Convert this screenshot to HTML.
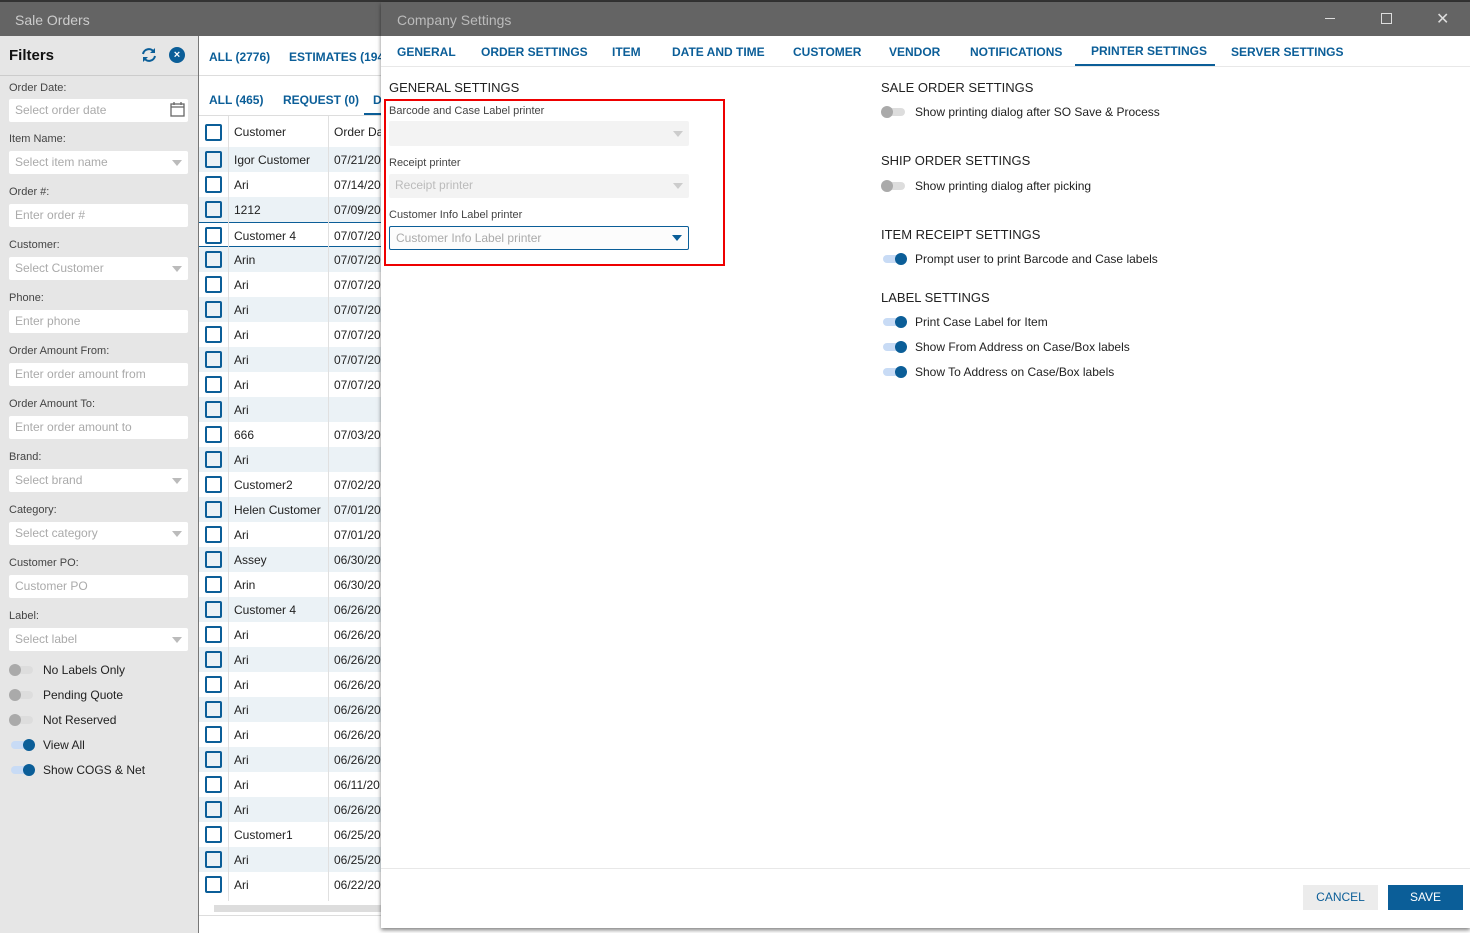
<!DOCTYPE html>
<html><head><meta charset="utf-8"><style>
*{box-sizing:border-box;margin:0;padding:0}
body{width:1470px;height:933px;overflow:hidden;background:#fff;font-family:"Liberation Sans",sans-serif;font-size:12px;color:#222;position:relative}
.a{position:absolute;white-space:nowrap}
.tb{background:#646464;height:34px;top:2px}
.lbl{font-size:11px;color:#444}
.in{background:#fff;height:23px;border-radius:2px;color:#aaa;font-size:12px;padding:4px 6px}
.tri{position:absolute;right:6px;top:9px;width:0;height:0;border-left:5px solid transparent;border-right:5px solid transparent;border-top:6px solid #bbb}
.tg{position:absolute;width:22px;height:8px;border-radius:4px}
.tg i{position:absolute;width:12px;height:12px;border-radius:6px;top:-2px}
.off{background:#ddd}.off i{background:#aaa;left:-2px}
.on{background:#c8dbf5}.on i{background:#0b5e98;right:-2px}
.tab{color:#0b5e98;font-weight:bold;font-size:12px}
.cb{position:absolute;left:6px;width:17px;height:17px;border:2px solid #0b5e98;border-radius:2px;background:#fff}
.row{position:absolute;left:199px;width:182px;height:25px;font-size:12px;overflow:hidden}
.row span{position:absolute;top:6px;white-space:nowrap}
</style></head><body>
<div class="a" style="left:0;top:0;width:1470px;height:2px;background:#333"></div>
<div class="a tb" style="left:0;width:381px"></div>
<div class="a" style="left:15px;top:12px;font-size:14px;color:#ccc">Sale Orders</div>
<div class="a" style="left:0;top:36px;width:198px;height:897px;background:#e6e6e6"></div>
<div class="a" style="left:198px;top:36px;width:1px;height:897px;background:#777"></div>
<div class="a" style="left:9px;top:47px;font-size:15px;font-weight:bold;color:#111">Filters</div>
<svg class="a" style="left:140px;top:47px" width="18" height="16" viewBox="0 0 18 16"><path d="M3 7a6 6 0 0 1 11-2M15 9a6 6 0 0 1-11 2" fill="none" stroke="#0b5e98" stroke-width="2"/><path d="M15 1v5h-5zM3 15v-5h5z" fill="#0b5e98"/></svg>
<div class="a" style="left:169px;top:47px;width:16px;height:16px;border-radius:8px;background:#0b5e98;color:#fff;font-size:11px;text-align:center;line-height:16px;font-weight:bold">×</div>
<div class="a" style="left:0;top:75px;width:198px;height:1px;background:#ccc"></div>
<div class="a lbl" style="left:9px;top:82px">Order Date:</div>
<div class="a in" style="left:9px;top:99px;width:179px">Select order date<svg style="position:absolute;right:3px;top:3px" width="15" height="15" viewBox="0 0 15 15"><rect x="1" y="2" width="13" height="12" fill="none" stroke="#666" stroke-width="1.3"/><path d="M1 5h13M4 0v3M11 0v3" stroke="#666" stroke-width="1.3"/></svg></div>
<div class="a lbl" style="left:9px;top:133px">Item Name:</div>
<div class="a in" style="left:9px;top:151px;width:179px">Select item name<div class="tri"></div></div>
<div class="a lbl" style="left:9px;top:186px">Order #:</div>
<div class="a in" style="left:9px;top:204px;width:179px">Enter order #</div>
<div class="a lbl" style="left:9px;top:239px">Customer:</div>
<div class="a in" style="left:9px;top:257px;width:179px">Select Customer<div class="tri"></div></div>
<div class="a lbl" style="left:9px;top:292px">Phone:</div>
<div class="a in" style="left:9px;top:310px;width:179px">Enter phone</div>
<div class="a lbl" style="left:9px;top:345px">Order Amount From:</div>
<div class="a in" style="left:9px;top:363px;width:179px">Enter order amount from</div>
<div class="a lbl" style="left:9px;top:398px">Order Amount To:</div>
<div class="a in" style="left:9px;top:416px;width:179px">Enter order amount to</div>
<div class="a lbl" style="left:9px;top:451px">Brand:</div>
<div class="a in" style="left:9px;top:469px;width:179px">Select brand<div class="tri"></div></div>
<div class="a lbl" style="left:9px;top:504px">Category:</div>
<div class="a in" style="left:9px;top:522px;width:179px">Select category<div class="tri"></div></div>
<div class="a lbl" style="left:9px;top:557px">Customer PO:</div>
<div class="a in" style="left:9px;top:575px;width:179px">Customer PO</div>
<div class="a lbl" style="left:9px;top:610px">Label:</div>
<div class="a in" style="left:9px;top:628px;width:179px">Select label<div class="tri"></div></div>
<div class="tg off" style="left:11px;top:666px"><i></i></div><div class="a" style="left:43px;top:663px">No Labels Only</div>
<div class="tg off" style="left:11px;top:691px"><i></i></div><div class="a" style="left:43px;top:688px">Pending Quote</div>
<div class="tg off" style="left:11px;top:716px"><i></i></div><div class="a" style="left:43px;top:713px">Not Reserved</div>
<div class="tg on" style="left:11px;top:741px"><i></i></div><div class="a" style="left:43px;top:738px">View All</div>
<div class="tg on" style="left:11px;top:766px"><i></i></div><div class="a" style="left:43px;top:763px">Show COGS &amp; Net</div>
<div class="a tab" style="left:209px;top:50px">ALL (2776)</div>
<div class="a tab" style="left:289px;top:50px">ESTIMATES (194</div>
<div class="a" style="left:199px;top:75px;width:182px;height:1px;background:#ddd"></div>
<div class="a tab" style="left:209px;top:93px">ALL (465)</div>
<div class="a tab" style="left:283px;top:93px">REQUEST (0)</div>
<div class="a tab" style="left:373px;top:93px">D</div>
<div class="a" style="left:364px;top:113px;width:17px;height:2px;background:#0b5e98"></div>
<div class="a" style="left:199px;top:115px;width:182px;height:1px;background:#ddd"></div>
<div id="rows"></div>
<div class="a" style="left:228px;top:116px;width:1px;height:785px;background:#e0e0e0"></div>
<div class="a" style="left:328px;top:116px;width:1px;height:785px;background:#e0e0e0"></div>
<div class="a" style="left:214px;top:905px;width:167px;height:7px;background:#ddd"></div>
<div class="a" style="left:199px;top:915px;width:182px;height:1px;background:#ddd"></div>
<div class="a" style="left:381px;top:2px;width:1089px;height:926px;background:#fff;box-shadow:0 2px 4px rgba(0,0,0,.5)"></div>
<div class="a tb" style="left:381px;width:1089px"></div>
<div class="a" style="left:397px;top:12px;font-size:14px;color:#bbb">Company Settings</div>
<div class="a" style="left:1325px;top:18px;width:10px;height:1px;background:#ddd"></div>
<div class="a" style="left:1381px;top:13px;width:11px;height:11px;border:1px solid #ddd"></div>
<div class="a" style="left:1436px;top:9px;font-size:16px;color:#ddd">✕</div>
<div class="a tab" style="left:397px;top:45px">GENERAL</div>
<div class="a tab" style="left:481px;top:45px">ORDER SETTINGS</div>
<div class="a tab" style="left:612px;top:45px">ITEM</div>
<div class="a tab" style="left:672px;top:45px">DATE AND TIME</div>
<div class="a tab" style="left:793px;top:45px">CUSTOMER</div>
<div class="a tab" style="left:889px;top:45px">VENDOR</div>
<div class="a tab" style="left:970px;top:45px">NOTIFICATIONS</div>
<div class="a tab" style="left:1091px;top:44px">PRINTER SETTINGS</div>
<div class="a tab" style="left:1231px;top:45px">SERVER SETTINGS</div>
<div class="a" style="left:381px;top:66px;width:1089px;height:1px;background:#e8e8e8"></div>
<div class="a" style="left:1075px;top:64px;width:140px;height:2px;background:#0b5e98"></div>
<div class="a" style="left:389px;top:80px;font-size:13px;color:#222">GENERAL SETTINGS</div>
<div class="a" style="left:384px;top:99px;width:341px;height:167px;border:2px solid #e00"></div>
<div class="a lbl" style="left:389px;top:105px">Barcode and Case Label printer</div>
<div class="a in" style="left:389px;top:121px;width:300px;height:25px;background:#f3f3f3"><div class="tri" style="top:10px;border-top-color:#ccc"></div></div>
<div class="a lbl" style="left:389px;top:157px">Receipt printer</div>
<div class="a in" style="left:389px;top:174px;width:300px;height:24px;background:#f3f3f3;color:#bbb">Receipt printer<div class="tri" style="border-top-color:#ccc"></div></div>
<div class="a lbl" style="left:389px;top:209px">Customer Info Label printer</div>
<div class="a in" style="left:389px;top:226px;width:300px;height:24px;border:1px solid #0b5e98;background:#fcfcfc;color:#aaa">Customer Info Label printer<div class="tri" style="border-top-color:#0b5e98;top:8px"></div></div>
<div class="a" style="left:881px;top:80px;font-size:13px">SALE ORDER SETTINGS</div>
<div class="tg off" style="left:883px;top:108px"><i></i></div><div class="a" style="left:915px;top:105px">Show printing dialog after SO Save &amp; Process</div>
<div class="a" style="left:881px;top:153px;font-size:13px">SHIP ORDER SETTINGS</div>
<div class="tg off" style="left:883px;top:182px"><i></i></div><div class="a" style="left:915px;top:179px">Show printing dialog after picking</div>
<div class="a" style="left:881px;top:227px;font-size:13px">ITEM RECEIPT SETTINGS</div>
<div class="tg on" style="left:883px;top:255px"><i></i></div><div class="a" style="left:915px;top:252px">Prompt user to print Barcode and Case labels</div>
<div class="a" style="left:881px;top:290px;font-size:13px">LABEL SETTINGS</div>
<div class="tg on" style="left:883px;top:318px"><i></i></div><div class="a" style="left:915px;top:315px">Print Case Label for Item</div>
<div class="tg on" style="left:883px;top:343px"><i></i></div><div class="a" style="left:915px;top:340px">Show From Address on Case/Box labels</div>
<div class="tg on" style="left:883px;top:368px"><i></i></div><div class="a" style="left:915px;top:365px">Show To Address on Case/Box labels</div>
<div class="a" style="left:381px;top:868px;width:1089px;height:1px;background:#e8e8e8"></div>
<div class="a" style="left:1303px;top:885px;width:75px;height:25px;background:#ececec;color:#0b5e98;text-align:center;line-height:25px">CANCEL</div>
<div class="a" style="left:1388px;top:885px;width:75px;height:25px;background:#0b5e98;color:#fff;text-align:center;line-height:25px">SAVE</div>
<script>
var d=[["Customer","Order Da"],["Igor Customer","07/21/20"],["Ari","07/14/20"],["1212","07/09/20"],["Customer 4","07/07/20"],["Arin","07/07/20"],["Ari","07/07/20"],["Ari","07/07/20"],["Ari","07/07/20"],["Ari","07/07/20"],["Ari","07/07/20"],["Ari",""],["666","07/03/20"],["Ari",""],["Customer2","07/02/20"],["Helen Customer","07/01/20"],["Ari","07/01/20"],["Assey","06/30/20"],["Arin","06/30/20"],["Customer 4","06/26/20"],["Ari","06/26/20"],["Ari","06/26/20"],["Ari","06/26/20"],["Ari","06/26/20"],["Ari","06/26/20"],["Ari","06/26/20"],["Ari","06/11/20"],["Ari","06/26/20"],["Customer1","06/25/20"],["Ari","06/25/20"],["Ari","06/22/20"]];
var h="";d.forEach(function(r,i){var t=i==0?118:147+(i-1)*25;var hh=i==0?28:25;var bg=(i>0&&i%2==1)?"#ebf2f6":"#fff";var bd=i==4?"border-top:1px solid #0b5e98;border-bottom:1px solid #0b5e98;":"";
h+='<div class="row" style="top:'+t+'px;height:'+hh+'px;background:'+bg+';'+bd+'"><div class="cb" style="top:'+(hh/2-8.5)+'px;background:'+bg+'"></div><span style="left:35px;top:'+(hh/2-7)+'px">'+r[0]+'</span><span style="left:135px;top:'+(hh/2-7)+'px">'+r[1]+'</span></div>';});
document.getElementById("rows").innerHTML=h;
</script>
</body></html>
